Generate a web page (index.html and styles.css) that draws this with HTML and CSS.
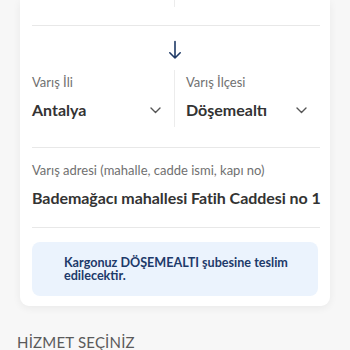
FILE: index.html
```html
<!DOCTYPE html>
<html lang="tr">
<head>
<meta charset="utf-8">
<link rel="stylesheet" href="styles.css">
</head>
<body>
<div class="card">
  <div class="pair pair-top">
    <div class="cell cell-left"></div>
    <div class="cell"></div>
  </div>
  <div class="rule"></div>
  <div class="swap">
    <svg width="14" height="20" viewBox="0 0 14 20" fill="none" stroke="#1f3a66" stroke-width="1.6" stroke-linecap="round" stroke-linejoin="round"><path d="M7 1.5V18M1.8 12.8L7 18l5.2-5.2"/></svg>
  </div>
  <div class="pair">
    <div class="cell cell-left">
      <div class="label">Varış İli</div>
      <div class="value-row"><span class="value">Antalya</span><span class="chev"><svg width="11" height="7" viewBox="0 0 11 7" fill="none" stroke="#555" stroke-width="1.4" stroke-linecap="round" stroke-linejoin="round"><path d="M1 1l4.5 4.5L10 1"/></svg></span></div>
    </div>
    <div class="cell cell-right">
      <div class="label">Varış İlçesi</div>
      <div class="value-row"><span class="value">Döşemealtı</span><span class="chev"><svg width="11" height="7" viewBox="0 0 11 7" fill="none" stroke="#555" stroke-width="1.4" stroke-linecap="round" stroke-linejoin="round"><path d="M1 1l4.5 4.5L10 1"/></svg></span></div>
    </div>
  </div>
  <div class="rule rule-gap"></div>
  <div class="field">
    <div class="label">Varış adresi (mahalle, cadde ismi, kapı no)</div>
    <div class="value address">Bademağacı mahallesi Fatih Caddesi no 1</div>
  </div>
  <div class="rule"></div>
  <div class="info">Kargonuz DÖŞEMEALTI şubesine teslim edilecektir.</div>
</div>
<div class="section-title">HİZMET SEÇİNİZ</div>
</body>
</html>
```
FILE: styles.css
```css
html, body {
  margin: 0;
  padding: 0;
}
body {
  background: #f7f7f7;
  font-family: Lato, "Open Sans", sans-serif;
  width: 350px;
  height: 350px;
  overflow: hidden;
}
.card {
  margin: 0 20px;
  background: #fff;
  border-radius: 0 0 9px 9px;
  padding: 0 12px 10px;
  box-shadow: 0 2px 8px rgba(0,0,0,0.06);
}
.pair {
  display: grid;
  grid-template-columns: 1fr 1fr;
}
.pair-top {
  height: 7px;
  margin-bottom: 18px;
}
.cell-left {
  border-right: 1px solid #ececec;
}
.rule {
  border-top: 1px solid #e8e8e8;
  margin-right: -2px;
}
.rule-gap {
  margin-top: 20px;
}
.swap {
  height: 44px;
  display: flex;
  justify-content: center;
  align-items: flex-start;
  padding-top: 14px;
  box-sizing: border-box;
}
.cell {
  padding-top: 4px;
}
.cell-left {
  padding-right: 13px;
}
.cell-right {
  padding-left: 11px;
  padding-right: 11px;
}
.label {
  font-size: 13px;
  color: #707070;
  line-height: 16px;
}
.value-row {
  display: flex;
  justify-content: space-between;
  align-items: center;
  margin-top: 10px;
  padding-bottom: 7px;
}
.value {
  font-size: 16px;
  font-weight: 700;
  color: #333;
  line-height: 20px;
}
.chev {
  display: flex;
}
.field {
  padding: 14px 0 19px;
}
.address {
  margin-top: 10px;
  white-space: nowrap;
  letter-spacing: -0.05px;
}
.info {
  margin-top: 14px;
  background: #ebf3fd;
  border-radius: 8px;
  padding: 14px 20px 14px 32px;
  color: #1d3a6a;
  font-size: 12.6px;
  font-weight: 700;
  line-height: 13px;
}
.section-title {
  margin: 28px 0 0 17px;
  font-size: 15px;
  line-height: 16px;
  color: #5a5a5a;
  letter-spacing: 0.2px;
}
```
